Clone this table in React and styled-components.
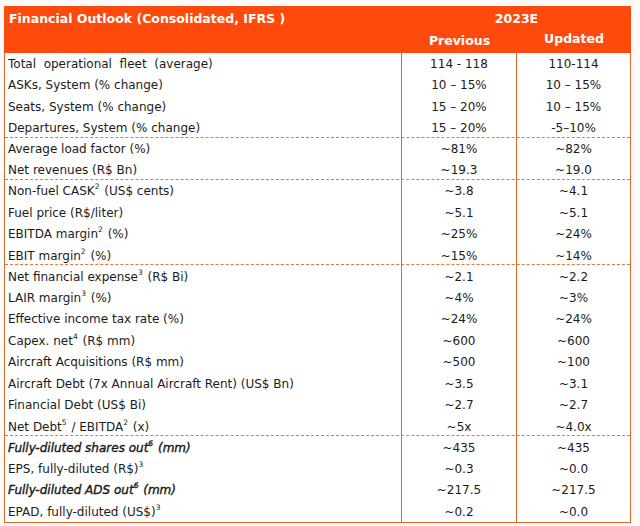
import React from "react";
import styled, { createGlobalStyle } from "styled-components";

const Global = createGlobalStyle`
  html, body { margin: 0; padding: 0; background: #fbfaf8; }
  body { font-family: "DejaVu Sans", "Liberation Sans", sans-serif; }
`;

const Page = styled.div`
  padding: 6px 9px 0 4px;
  width: 640px;
  height: 526px;
  box-sizing: border-box;
`;

const Table = styled.div`
  width: 627px;
  background: #ffffff;
  border-left: 1px solid #d9662b;
  border-right: 1px solid #d9662b;
  border-bottom: 1.5px solid #d9662b;
  box-sizing: border-box;
`;

const Header = styled.div`
  display: grid;
  grid-template-columns: 398px 115px 1fr;
  grid-template-rows: 23px 23.5px;
  background: #fe4a0c;
  color: #ffffff;
  font-weight: bold;
  font-size: 12.5px;
  margin-left: -1px;
  margin-right: -1px;
`;

const Title = styled.div`
  grid-column: 1;
  grid-row: 1;
  padding-left: 5px;
  display: flex;
  align-items: center;
  padding-top: 1px;
`;

const Year = styled.div`
  grid-column: 2 / 4;
  grid-row: 1;
  display: flex;
  align-items: center;
  justify-content: center;
  padding-top: 1px;
`;

const SubHead = styled.div`
  grid-row: 2;
  grid-column: ${(p) => p.$col};
  display: flex;
  align-items: center;
  justify-content: center;
  padding-bottom: ${(p) => (p.$col === 3 ? "4px" : "0")};
`;

const Row = styled.div`
  display: grid;
  grid-template-columns: 397px 115px 1fr;
  height: 21.45px;
  font-size: 12px;
  color: #1b1b1b;
  border-top: ${(p) => (p.$sep ? "1.5px dashed #e8763d" : "none")};
  margin-top: ${(p) => (p.$sep ? "-1.5px" : "0")};
  box-sizing: content-box;
`;

const Label = styled.div`
  display: flex;
  align-items: center;
  padding-left: 3px;
  padding-top: 1px;
  border-right: 1.5px solid #d9662b;
  font-style: ${(p) => (p.$italic ? "italic" : "normal")};
  -webkit-text-stroke: ${(p) => (p.$italic ? "0.4px #1b1b1b" : "0")};
  white-space: pre;
`;

const Value = styled.div`
  display: flex;
  align-items: center;
  justify-content: center;
  padding-top: 1px;
  border-right: ${(p) => (p.$last ? "none" : "1.5px solid #d9662b")};
`;

const Sup = styled.sup`
  font-size: 7.5px;
  line-height: 0;
  vertical-align: 0;
  position: relative;
  top: -4px;
  margin: 0 1px 0 0;
`;

const rows = [
  { label: "Total  operational  fleet  (average)", prev: "114 - 118", upd: "110-114" },
  { label: "ASKs, System (% change)", prev: "10 – 15%", upd: "10 – 15%" },
  { label: "Seats, System (% change)", prev: "15 – 20%", upd: "10 – 15%" },
  { label: "Departures, System (% change)", prev: "15 – 20%", upd: "-5–10%" },
  { label: "Average load factor (%)", prev: "~81%", upd: "~82%", sep: true },
  { label: "Net revenues (R$ Bn)", prev: "~19.3", upd: "~19.0" },
  { label: ["Non-fuel CASK", "2", " (US$ cents)"], prev: "~3.8", upd: "~4.1", sep: true },
  { label: "Fuel price (R$/liter)", prev: "~5.1", upd: "~5.1" },
  { label: ["EBITDA margin", "2", " (%)"], prev: "~25%", upd: "~24%" },
  { label: ["EBIT margin", "2", " (%)"], prev: "~15%", upd: "~14%" },
  { label: ["Net financial expense", "3", " (R$ Bi)"], prev: "~2.1", upd: "~2.2", sep: true },
  { label: ["LAIR margin", "3", " (%)"], prev: "~4%", upd: "~3%" },
  { label: "Effective income tax rate (%)", prev: "~24%", upd: "~24%" },
  { label: ["Capex. net", "4", " (R$ mm)"], prev: "~600", upd: "~600" },
  { label: "Aircraft Acquisitions (R$ mm)", prev: "~500", upd: "~100" },
  { label: "Aircraft Debt (7x Annual Aircraft Rent) (US$ Bn)", prev: "~3.5", upd: "~3.1" },
  { label: "Financial Debt (US$ Bi)", prev: "~2.7", upd: "~2.7" },
  { label: ["Net Debt", "5", " / EBITDA", "2", " (x)"], prev: "~5x", upd: "~4.0x" },
  { label: ["Fully-diluted shares out", "6", " (mm)"], prev: "~435", upd: "~435", sep: true, italic: true },
  { label: ["EPS, fully-diluted (R$)", "3", ""], prev: "~0.3", upd: "~0.0" },
  { label: ["Fully-diluted ADS out", "6", " (mm)"], prev: "~217.5", upd: "~217.5", italic: true },
  { label: ["EPAD, fully-diluted (US$)", "3", ""], prev: "~0.2", upd: "~0.0" },
];

function renderLabel(label) {
  if (typeof label === "string") return label;
  return label.map((part, i) =>
    i % 2 === 1 ? <Sup key={i}>{part}</Sup> : <React.Fragment key={i}>{part}</React.Fragment>
  );
}

export default function App() {
  return (
    <>
      <Global />
      <Page>
        <Table>
          <Header>
            <Title>Financial Outlook (Consolidated, IFRS )</Title>
            <Year>2023E</Year>
            <SubHead $col={2}>Previous</SubHead>
            <SubHead $col={3}>Updated</SubHead>
          </Header>
          {rows.map((r, i) => (
            <Row key={i} $sep={r.sep}>
              <Label $italic={r.italic}>{renderLabel(r.label)}</Label>
              <Value>{r.prev}</Value>
              <Value $last>{r.upd}</Value>
            </Row>
          ))}
        </Table>
      </Page>
    </>
  );
}
